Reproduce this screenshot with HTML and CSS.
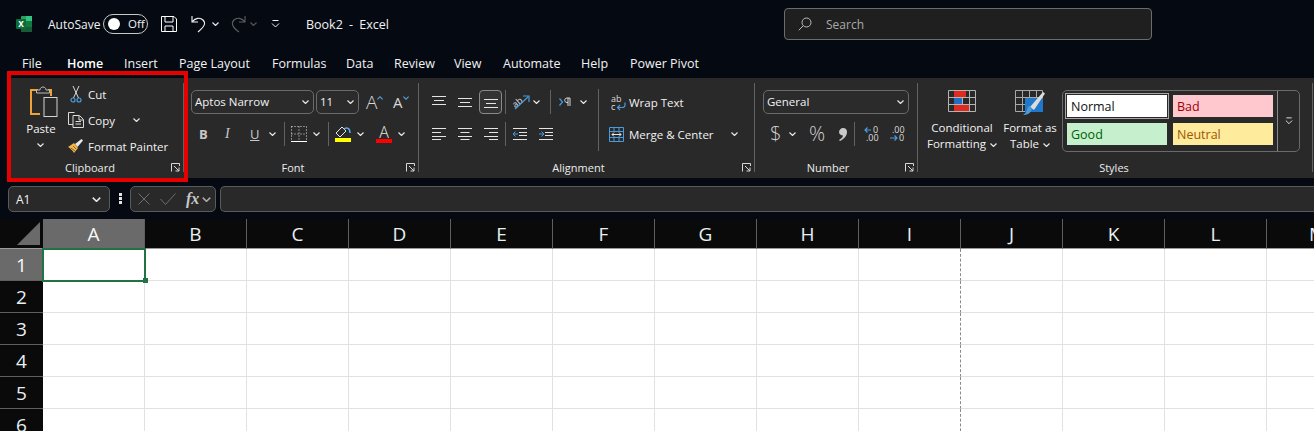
FILE: index.html
```html
<!DOCTYPE html>
<html lang="en">
<head>
<meta charset="utf-8">
<title>Book2 - Excel</title>
<link rel="stylesheet" href="styles.css">
</head>
<body>
<svg class="defs" width="0" height="0" aria-hidden="true">
  <symbol id="chev" viewBox="0 0 7 4"><path d="M.5.5 3.5 3.5 6.5.5" fill="none" stroke="currentColor" stroke-width="1.2"/></symbol>
  <symbol id="launch" viewBox="0 0 9 9"><path d="M.5 8.500V.5H8.500V3M3 3 8 8M8 4.500V8H4.500" fill="none" stroke="#d8d8d8" stroke-width="1"/></symbol>
</svg>
<div class="app">
  <header class="titlebar">
    <svg class="xl" width="16" height="16" viewBox="0 0 16 16"><rect x="5" width="11" height="16" rx="1" fill="#21a366"/><rect x="10" y="0" width="6" height="5" fill="#33c481"/><rect x="10" y="5" width="6" height="6" fill="#107c41"/><rect x="5" y="11" width="11" height="5" fill="#185c37"/><rect y="3" width="10" height="10" rx="1" fill="#0e6b3a"/><text x="5" y="11" class="xl-x">x</text></svg>
    <span class="autosave">AutoSave</span>
    <span class="toggle"><i class="knob"></i><span>Off</span></span>
    <svg class="save" width="16" height="16" viewBox="0 0 16 16"><path d="M.5.5H13L15.500 3V15.500H.5ZM4 .5V6H12V.5M4 15.500V10H12V15.500" fill="none" stroke="#fff"/></svg>
    <svg class="undo" width="18" height="18" viewBox="0 0 18 18"><path d="M1 1V7H7M1 7C4 3 9 2 12 5 15 8 14 11 7 17" fill="none" stroke="#f4f4f4" stroke-width="1.1"/></svg>
    <svg class="chev tb-c1"><use href="#chev"/></svg>
    <svg class="redo" width="16" height="18" viewBox="0 0 16 18"><path d="M15 1V7H9M15 7C12 3 7 2 4 5 1 8 2 12 9 17" fill="none" stroke="#5c5e60" stroke-width="1.1"/></svg>
    <svg class="chev tb-c2 dim"><use href="#chev"/></svg>
    <svg class="qat" width="9" height="8" viewBox="0 0 9 8"><path d="M1.500.5H7.500M1 3.500 4.500 7 8 3.500" fill="none" stroke="#f0f0f0"/></svg>
    <span class="doc">Book2 - Excel</span>
    <div class="search">
      <svg width="14" height="14" viewBox="0 0 14 14"><circle cx="8.500" cy="5.500" r="4.500" fill="none" stroke="#bdbdbd"/><path d="M5 9 .8 13.200" stroke="#bdbdbd" fill="none"/></svg>
      <span>Search</span>
    </div>
  </header>
  <nav class="tabs">
    <span>File</span><span class="on">Home</span><span>Insert</span><span>Page Layout</span><span>Formulas</span><span>Data</span><span>Review</span><span>View</span><span>Automate</span><span>Help</span><span>Power Pivot</span>
  </nav>
  <section class="ribbon">
    <div class="group g-clip">
      <div class="body clip-body">
        <div class="paste">
          <svg width="28" height="31" viewBox="0 0 28 31"><path d="M8 4H1V28H10" fill="none" stroke="#eea33a" stroke-width="2"/><path d="M18 4H21V10" fill="none" stroke="#eea33a" stroke-width="2"/><path d="M6.500 7V4H10C10 0 16 0 16 4H19.500V7Z" fill="#292929" stroke="#b9b9b9"/><rect x="14" y="11.500" width="13" height="19" fill="#292929" stroke="#d4d4d4"/></svg>
          <span class="txt">Paste</span>
          <svg class="chev"><use href="#chev"/></svg>
        </div>
        <div class="clip-list">
          <div class="clip-item"><svg width="16" height="17" viewBox="0 0 16 17"><path d="M5 0 10.500 12M11 0 5.500 12" stroke="#d8d8d8" fill="none"/><circle cx="5" cy="14" r="2" fill="none" stroke="#4a9bdc" stroke-width="1.200"/><circle cx="11" cy="14" r="2" fill="none" stroke="#4a9bdc" stroke-width="1.200"/></svg><span class="txt">Cut</span></div>
          <div class="clip-item"><svg width="16" height="16" viewBox="0 0 16 16"><path d="M5 12.500H.5V.5H6.500M5 3.500H11.500L15.500 7.500V15.500H5ZM11 4V8H15M7.500 9.500H13M7.500 12H13" fill="none" stroke="#dcdcdc"/></svg><span class="txt">Copy</span><svg class="chev copy-c"><use href="#chev"/></svg></div>
          <div class="clip-item"><svg width="16" height="16" viewBox="0 0 16 16"><path d="M0 9 6 5 10 10 6 15C5 13 2 10 0 9Z" fill="#f2b64a"/><path d="M7 6 13.500 1 15 2.500 9.500 9Z" fill="#e6e6e6"/><path d="M3 10 7 13M5 8 8 11" stroke="#8a6420"/></svg><span class="txt">Format Painter</span></div>
        </div>
      </div>
      <div class="foot"><span>Clipboard</span><svg class="launch"><use href="#launch"/></svg></div>
    </div>

    <div class="group g-font">
      <div class="body">
        <div class="row font-r1">
          <div class="select sel-font"><span>Aptos Narrow</span><svg class="chev"><use href="#chev"/></svg></div>
          <div class="select sel-size"><span>11</span><svg class="chev"><use href="#chev"/></svg></div>
          <span class="grow">A<svg width="6" height="4" viewBox="0 0 7 4"><path d="M.5 3.500 3.500.5 6.500 3.500" fill="none" stroke="#5aa9e6" stroke-width="1.300"/></svg></span>
          <span class="grow small">A<svg width="6" height="4" viewBox="0 0 7 4"><path d="M.5.5 3.500 3.500 6.500.5" fill="none" stroke="#5aa9e6" stroke-width="1.300"/></svg></span>
        </div>
        <div class="row font-r2">
          <b class="fmt">B</b><i class="fmt it">I</i><span class="fmt un">U</span>
          <svg class="chev"><use href="#chev"/></svg><span class="sep"></span>
          <svg width="16" height="16" viewBox="0 0 16 16"><path d="M.5.5H15.500V15M.5.500V15M8 .5V15M.5 8H15.500" fill="none" stroke="#e4e4e4" stroke-dasharray="1 2"/><path d="M0 15.500H16" stroke="#fff"/></svg>
          <svg class="chev"><use href="#chev"/></svg><span class="sep"></span>
          <div class="swatch"><svg width="16" height="12" viewBox="0 0 16 12"><path d="M7 1 1 7 5 11 11 5Z" fill="none" stroke="#e8e8e8"/><path d="M9 3C12 1 15 2 15 7" fill="none" stroke="#5aa9e6" stroke-width="1.500"/></svg><i class="bar yellow"></i></div>
          <svg class="chev"><use href="#chev"/></svg>
          <div class="swatch letter"><span>A</span><i class="bar red"></i></div>
          <svg class="chev"><use href="#chev"/></svg>
        </div>
      </div>
      <div class="foot"><span>Font</span><svg class="launch"><use href="#launch"/></svg></div>
    </div>

    <div class="group g-align">
      <div class="body al-body">
        <div class="al-col al-left">
          <div class="row al-r1">
            <svg class="lines" width="14" height="12" viewBox="0 0 14 12"><path d="M0 .5H14M2 4.500H12M0 8.500H14"/></svg>
            <svg class="lines" width="14" height="12" viewBox="0 0 14 12"><path d="M0 2.500H14M2 6.500H12M0 10.500H14"/></svg>
            <div class="pressed"><svg class="lines" width="14" height="12" viewBox="0 0 14 12"><path d="M0 3.500H14M2 7.500H12M0 11.500H14"/></svg></div>
            <span class="sep"></span>
            <svg width="18" height="16" viewBox="0 0 18 16"><text x="0" y="11" class="mini rot">ab</text><path d="M3 15 16 3M11 2H17V8" fill="none" stroke="#4a9bdc" stroke-width="1.200"/></svg>
            <svg class="chev"><use href="#chev"/></svg>
            <span class="sep"></span>
            <svg width="12" height="10" viewBox="0 0 12 10"><path d="M.5 1.500 3.500 5 .5 8.500" fill="none" stroke="#4a9bdc" stroke-width="1.200"/><path d="M9 1V9M11 1V9M11 1H8C5 1 5 5.500 8 5.500H9" fill="none" stroke="#d8d8d8"/></svg>
            <svg class="chev"><use href="#chev"/></svg>
          </div>
          <div class="row al-r2">
            <svg class="lines" width="14" height="12" viewBox="0 0 14 12"><path d="M0 .5H14M0 4.500H9M0 8.500H14M0 11.500H9"/></svg>
            <svg class="lines" width="14" height="12" viewBox="0 0 14 12"><path d="M0 .5H14M2.500 4.500H11.500M0 8.500H14M2.500 11.500H11.500"/></svg>
            <svg class="lines" width="14" height="12" viewBox="0 0 14 12"><path d="M0 .5H14M5 4.500H14M0 8.500H14M5 11.500H14"/></svg>
            <span class="sep"></span>
            <svg class="lines" width="14" height="12" viewBox="0 0 14 12"><path d="M0 .5H14M6 4.500H14M6 7.500H14M0 11.500H14"/><path class="blue" d="M5 6H0M2.500 3.500 0 6 2.500 8.500"/></svg>
            <svg class="lines" width="14" height="12" viewBox="0 0 14 12"><path d="M0 .5H14M6 4.500H14M6 7.500H14M0 11.500H14"/><path class="blue" d="M0 6H5M2.500 3.500 5 6 2.500 8.500"/></svg>
          </div>
        </div>
        <span class="sep tall"></span>
        <div class="al-col al-right">
          <div class="row al-r3">
            <svg width="15" height="15" viewBox="0 0 15 15"><text class="mini"><tspan x="0" y="6.500">ab</tspan><tspan x="0" y="14.500">c</tspan></text><path d="M14 7.500V10C14 12 12.500 12.500 11 12.500H7M9 10 6.500 12.500 9 15" fill="none" stroke="#4a9bdc" stroke-width="1.200"/></svg>
            <span class="txt">Wrap Text</span>
          </div>
          <div class="row al-r4">
            <svg width="15" height="15" viewBox="0 0 15 15"><path d="M.5.500H14.500V14.500H.5ZM.5 4.500H14.500M.5 10.500H14.500M5 .5V4.500M10 .5V4.500M5 10.500V14.500M10 10.500V14.500" fill="none" stroke="#4a9bdc"/><path d="M3 7.500H12M5 5.500 3 7.500 5 9.500M10 5.500 12 7.500 10 9.500" fill="none" stroke="#e8e8e8"/></svg>
            <span class="txt">Merge &amp; Center</span>
            <svg class="chev"><use href="#chev"/></svg>
          </div>
        </div>
      </div>
      <div class="foot"><span>Alignment</span><svg class="launch"><use href="#launch"/></svg></div>
    </div>

    <div class="group g-num">
      <div class="body">
        <div class="row num-r1"><div class="select sel-num"><span>General</span><svg class="chev"><use href="#chev"/></svg></div></div>
        <div class="row num-r2">
          <span class="sym">$</span><svg class="chev"><use href="#chev"/></svg>
          <span class="sym">%</span>
          <svg width="8" height="13" viewBox="0 0 8 13"><path d="M4 0C7 0 8 2 8 4 8 8 5 11 1 13L0 12C2 11 4 9 4 7.500 2 7.500 0 6 0 4 0 2 2 0 4 0Z" fill="#c8c8c8"/></svg>
          <span class="sep"></span>
          <svg width="15" height="16" viewBox="0 0 15 16"><path class="arrow" d="M7 4H1M3.500 1.500 1 4 3.500 6.500"/><text class="mini"><tspan x="9" y="7">0</tspan><tspan x="2" y="15">.00</tspan></text></svg>
          <svg width="15" height="16" viewBox="0 0 15 16"><path class="arrow" d="M0 12H7M4.500 9.500 7 12 4.500 14.500"/><text class="mini"><tspan x="2" y="7">.00</tspan><tspan x="9" y="15">0</tspan></text></svg>
        </div>
      </div>
      <div class="foot"><span>Number</span><svg class="launch"><use href="#launch"/></svg></div>
    </div>

    <div class="group g-styles">
      <div class="body styles-body">
        <div class="big cond">
          <svg width="28" height="22" viewBox="0 0 28 22"><path d="M.5.500H27.500V21.500H.5ZM.5 7.500H27.500M.5 14.500H27.500M7.500.5V21.500M14.500.5V21.500M21.500.5V21.500" fill="none" stroke="#b4b4b4"/><rect x="6" y="1" width="12" height="6" fill="#e02a20"/><rect x="6" y="8" width="8" height="6" fill="#1f6fc4"/><rect x="6" y="15" width="15" height="6" fill="#e02a20"/></svg>
          <span class="txt two">Conditional<br>Formatting <svg class="chev"><use href="#chev"/></svg></span>
        </div>
        <div class="big ftable">
          <svg width="30" height="26" viewBox="0 0 30 26"><path d="M.5.500H27.500V21.500H.5ZM.5 7.500H27.500M.5 14.500H27.500M7.500.5V21.500M14.500.5V21.500M21.500.5V21.500" fill="none" stroke="#a8a8a8"/><rect x="10" y="8" width="18" height="14" fill="#1f78c9"/><path d="M15 17 28 2 30 3.500 19 20Z" fill="#dcdcdc"/><path d="M8 25C12 25 16 24 17 18L14 16C12 18 12 23 8 25Z" fill="#4a9bdc"/></svg>
          <span class="txt two">Format as<br>Table <svg class="chev"><use href="#chev"/></svg></span>
        </div>
        <div class="gallery">
          <div class="cells">
            <span class="cell normal">Normal</span><span class="cell bad">Bad</span>
            <span class="cell good">Good</span><span class="cell neutral">Neutral</span>
          </div>
          <div class="more"><svg width="8" height="8" viewBox="0 0 9 8"><path d="M1.500.5H7.500M1 3.500 4.500 7 8 3.500" fill="none" stroke="#f0f0f0"/></svg></div>
        </div>
      </div>
      <div class="foot"><span>Styles</span></div>
    </div>
  </section>
  <section class="formula">
    <div class="box namebox"><span>A1</span><svg class="chev"><use href="#chev"/></svg></div>
    <svg class="dots" width="3" height="11" viewBox="0 0 3 11"><path d="M0 0H3V3H0ZM0 4H3V7H0ZM0 8H3V11H0Z" fill="#e4e4e4"/></svg>
    <div class="box fx">
      <svg width="12" height="12" viewBox="0 0 12 12"><path d="M.5.5 11.500 11.500M11.500.5 .5 11.500" stroke="#6e6e6e" fill="none"/></svg>
      <svg width="16" height="12" viewBox="0 0 16 12"><path d="M.5 6 5.500 11.500 15.500.5" stroke="#6e6e6e" fill="none"/></svg>
      <span class="fxt">fx</span>
      <svg class="chev"><use href="#chev"/></svg>
    </div>
    <div class="box input"></div>
  </section>
  <section class="sheet">
    <div class="hd corner"><i></i></div><div class="hd col sel">A</div><div class="hd col">B</div><div class="hd col">C</div><div class="hd col">D</div><div class="hd col">E</div><div class="hd col">F</div><div class="hd col">G</div><div class="hd col">H</div><div class="hd col">I</div><div class="hd col">J</div><div class="hd col">K</div><div class="hd col">L</div><div class="hd col">M</div>
    <div class="hd row-h sel">1</div><div class="c active"><i class="handle"></i></div><div class="c"></div><div class="c"></div><div class="c"></div><div class="c"></div><div class="c"></div><div class="c"></div><div class="c"></div><div class="c brk"></div><div class="c"></div><div class="c"></div><div class="c"></div><div class="c"></div>
    <div class="hd row-h">2</div><div class="c"></div><div class="c"></div><div class="c"></div><div class="c"></div><div class="c"></div><div class="c"></div><div class="c"></div><div class="c"></div><div class="c brk"></div><div class="c"></div><div class="c"></div><div class="c"></div><div class="c"></div>
    <div class="hd row-h">3</div><div class="c"></div><div class="c"></div><div class="c"></div><div class="c"></div><div class="c"></div><div class="c"></div><div class="c"></div><div class="c"></div><div class="c brk"></div><div class="c"></div><div class="c"></div><div class="c"></div><div class="c"></div>
    <div class="hd row-h">4</div><div class="c"></div><div class="c"></div><div class="c"></div><div class="c"></div><div class="c"></div><div class="c"></div><div class="c"></div><div class="c"></div><div class="c brk"></div><div class="c"></div><div class="c"></div><div class="c"></div><div class="c"></div>
    <div class="hd row-h">5</div><div class="c"></div><div class="c"></div><div class="c"></div><div class="c"></div><div class="c"></div><div class="c"></div><div class="c"></div><div class="c"></div><div class="c brk"></div><div class="c"></div><div class="c"></div><div class="c"></div><div class="c"></div>
    <div class="hd row-h">6</div><div class="c"></div><div class="c"></div><div class="c"></div><div class="c"></div><div class="c"></div><div class="c"></div><div class="c"></div><div class="c"></div><div class="c brk"></div><div class="c"></div><div class="c"></div><div class="c"></div><div class="c"></div>
  </section>
  <div class="highlight"></div>
</div>
</body>
</html>
```
FILE: styles.css
```css
* { box-sizing: border-box; }
html, body { margin: 0; height: 431px; overflow: hidden; background: #050a12; }
body { font-family: "Open Sans", "Noto Sans", sans-serif; font-size: 12px; color: #f2f2f2; }
.defs { position: absolute; }
svg { display: block; flex: none; overflow: visible; }
.app { position: relative; width: 1314px; height: 431px; overflow: hidden; }
.chev { width: 7px; height: 4px; color: #e6e6e6; }
.chev.dim { color: #555; }

/* title bar */
.titlebar { display: flex; align-items: center; height: 48px; padding-left: 16px; }
.xl-x { font: 700 10px "Liberation Sans", sans-serif; fill: #fff; text-anchor: middle; }
.autosave { margin-left: 16px; width: 55px; }
.toggle { display: flex; align-items: center; width: 45px; height: 20px; padding: 0 3px; gap: 8px; border: 1px solid #c8c8c8; border-radius: 10px; margin-top: -1px; }
.toggle span { font-size: 11.5px; }
.knob { width: 12px; height: 12px; border-radius: 50%; background: #fff; flex: none; margin-left: 1px; }
.save { margin-left: 13px; }
.undo { margin-left: 14px; }
.tb-c1 { margin-left: 3px; }
.redo { margin-left: 11px; }
.tb-c2 { margin-left: 4px; }
.qat { margin-left: 14px; }
.doc { margin-left: 26px; width: 478px; font-size: 12.5px; word-spacing: 3px; }
.search { display: flex; align-items: center; gap: 14px; width: 368px; height: 32px; padding-left: 13px; border: 1px solid #6a6d70; border-radius: 4px; background: #1f1f1f; color: #aaa; }

/* tabs */
.tabs { display: grid; grid-template-columns: 45px 57px 55px 93px 74px 48px 60px 49px 78px 49px auto; align-items: center; height: 30px; padding-left: 22px; }
.tabs span { font-size: 12.5px; }
.tabs .on { font-weight: 600; color: #fff; }

/* ribbon */
.ribbon { display: flex; align-items: flex-start; height: 100px; margin-left: 8px; padding-top: 5px; background: #292929; border-radius: 4px 0 0 4px; }
.group { position: relative; display: flex; flex-direction: column; flex: none; height: 89px; border-right: 1px solid #626262; }
.g-clip { width: 176px; }
.g-font { width: 235px; }
.g-align { width: 336px; }
.g-num { width: 163px; }
.g-styles { width: 395px; }
.body { flex: none; display: flex; flex-direction: column; height: 76px; padding-top: 7px; gap: 8px; }
.foot { position: relative; flex: none; height: 16px; display: flex; align-items: center; justify-content: center; padding-right: 16px; font-size: 11px; color: #ececec; }
.g-clip .foot { padding-right: 11px; }
.g-styles .foot { padding-right: 2px; }
.launch { position: absolute; right: 3px; top: 4px; width: 9px; height: 9px; }
.txt { font-size: 11.5px; white-space: nowrap; }
.sep { display: block; width: 1px; height: 24px; background: #626262; }
.row { display: grid; align-items: center; justify-items: start; height: 24px; }

/* clipboard */
.clip-body { flex-direction: row; gap: 0; padding: 3px 0 0 13px; }
.paste { display: flex; flex-direction: column; align-items: center; width: 40px; }
.paste svg:first-child { margin-left: 6px; }
.paste .txt { margin-top: 4px; }
.paste .chev { margin-top: 7px; margin-left: -2px; }
.clip-list { display: flex; flex-direction: column; margin-left: 7px; gap: 10px; }
.clip-item { display: flex; align-items: center; gap: 4px; height: 16px; }
.copy-c { margin-left: 14px; }

/* font */
.font-r1 { grid-template-columns: 125px 50px 27px auto; margin-left: 7px; }
.font-r2 { grid-template-columns: 26px 25px 19px 15px 7px 22px 15px 7px 22px 19px 22px auto; margin-left: 15px; }
.select { display: flex; align-items: center; justify-content: space-between; height: 24px; padding: 0 4px 1px 3px; border: 1px solid #6a6a6a; border-radius: 5px; background: #2b2b2b; font-size: 11.5px; }
.sel-font { width: 123px; }
.sel-size { width: 43px; }
.sel-num { width: 146px; }
.grow { display: flex; align-items: flex-start; font-size: 19px; font-weight: 300; line-height: 20px; color: #d8d8d8; }
.grow svg { margin-top: 4px; }
.grow.small { font-size: 15px; font-weight: 400; }
.fmt { font-size: 13px; color: #c8c8c8; line-height: 16px; }
.fmt.it { font-family: "Liberation Serif", serif; font-size: 14px; }
.un { text-decoration: underline; font-weight: 400; }
.swatch { display: flex; flex-direction: column; align-items: center; width: 16px; }
.bar { display: block; width: 16px; height: 4px; flex: none; }
.yellow { background: #ffff00; }
.red { background: #ff0000; }
.letter { line-height: 14px; font-size: 16px; font-weight: 300; color: #e4e4e4; }

/* alignment */
.lines { fill: none; stroke: #e4e4e4; stroke-width: 1; }
.lines .blue { stroke: #4a9bdc; }
.mini { font: 9px "Open Sans", sans-serif; fill: #dcdcdc; }
.rot { transform: rotate(-40deg); transform-origin: 6px 8px; }
.pressed { display: flex; align-items: center; justify-content: center; width: 23px; height: 24px; border: 1px solid #8a8a8a; border-radius: 4px; background: #333; }
.al-body { flex-direction: row; gap: 0; padding-left: 13px; }
.al-col { display: flex; flex-direction: column; gap: 8px; flex: none; }
.al-left { width: 166px; }
.sep.tall { height: 62px; flex: none; margin-top: -1px; }
.al-right { margin-left: 10px; }
.al-r1 { grid-template-columns: 26px 21px 26px 7px 21px 17px 9px 21px auto; }
.al-r2 { grid-template-columns: 26px 26px 21px 8px 26px auto; }
.al-r3 { grid-template-columns: 18px auto; margin-left: 2px; }
.al-r4 { grid-template-columns: 20px 102px auto; }

/* number */
.g-num .body { padding-left: 8px; }
.num-r2 { grid-template-columns: 19px 20px 30px 15px 10px 26px auto; margin-left: 7px; }
.sym { color: #d0d0d0; font-size: 20px; font-weight: 300; line-height: 20px; }
.arrow { fill: none; stroke: #4a9bdc; stroke-width: 1.2; }

/* styles */
.styles-body { flex-direction: row; padding-left: 13px; gap: 0; }
.big { display: flex; flex-direction: column; align-items: center; flex: none; }
.cond { width: 62px; }
.ftable { width: 64px; margin-left: 5px; }
.two { display: block; margin-top: 8px; text-align: center; line-height: 16px; }
.ftable .two { margin-top: 4px; }
.two .chev { display: inline-block; vertical-align: middle; margin-left: 1px; }
.gallery { display: flex; flex: none; width: 238px; height: 62px; border: 1px solid #6a6a6a; border-radius: 5px; }
.cells { display: grid; grid-template-columns: 100px 100px; grid-auto-rows: 22px; gap: 6px; padding: 4px 0 0 4px; width: 214px; }
.cell { display: flex; align-items: center; padding-left: 4px; font-size: 12.5px; }
.normal { background: #fff; color: #111; outline: 1px solid #a6a6a6; outline-offset: 1px; }
.bad { background: #ffc7ce; color: #9c0006; }
.good { background: #c6efce; color: #006100; }
.neutral { background: #ffeb9c; color: #9c5700; }
.more { flex: 1; display: flex; align-items: center; justify-content: center; border-left: 1px solid #8a8a8a; }

/* formula bar */
.formula { display: flex; align-items: flex-start; height: 41px; padding: 8px 0 0 8px; }
.box { display: flex; align-items: center; height: 26px; border: 1px solid #5a5a5a; border-radius: 5px; background: #292929; }
.namebox { width: 102px; justify-content: space-between; padding: 0 8px 0 7px; font-size: 12px; }
.namebox .chev { width: 9px; height: 5px; }
.dots { margin: 7px 8px 0 9px; }
.fx { width: 86px; padding-left: 7px; gap: 10px; color: #c8c8c8; }
.fxt { font: italic 700 16px "Liberation Serif", serif; }
.fx .chev { margin-left: -7px; width: 9px; height: 5px; color: #aaa; }
.input { margin-left: 4px; flex: 1; border-radius: 5px 0 0 5px; border-right: 0; }

/* sheet */
.sheet { display: grid; grid-template-columns: 43px repeat(13, 102px); grid-template-rows: 30px repeat(6, 32px); background: #fff; }
.hd { display: flex; align-items: center; justify-content: center; background: #0a0a0a; color: #e6f0f5; font-size: 19px; }
.col { border-right: 1px solid #5f5f5f; border-bottom: 1px solid #9a9a9a; }
.row-h { border-bottom: 1px solid #5f5f5f; }
.hd.sel { background: #6a6a6a; color: #f8f8f8; }
.corner { align-items: flex-end; justify-content: flex-end; padding: 0 3px 3px 0; border-bottom: 1px solid #9a9a9a; }
.corner i { display: block; width: 23px; height: 23px; background: #6a6a6a; clip-path: polygon(100% 0, 100% 100%, 0 100%); }
.c { position: relative; border-right: 1px solid #e1e1e1; border-bottom: 1px solid #e1e1e1; }
.brk { border-right: 1px dashed #8a8a8a; }
.active { outline: 2px solid #217346; outline-offset: -1px; border: 0; z-index: 1; }
.handle { position: absolute; right: -3px; bottom: -2px; width: 5px; height: 5px; background: #217346; }

/* annotation over the screenshot */
.highlight { position: absolute; left: 7px; top: 71px; width: 181px; height: 111px; border: 4px solid #e60000; pointer-events: none; }
```
